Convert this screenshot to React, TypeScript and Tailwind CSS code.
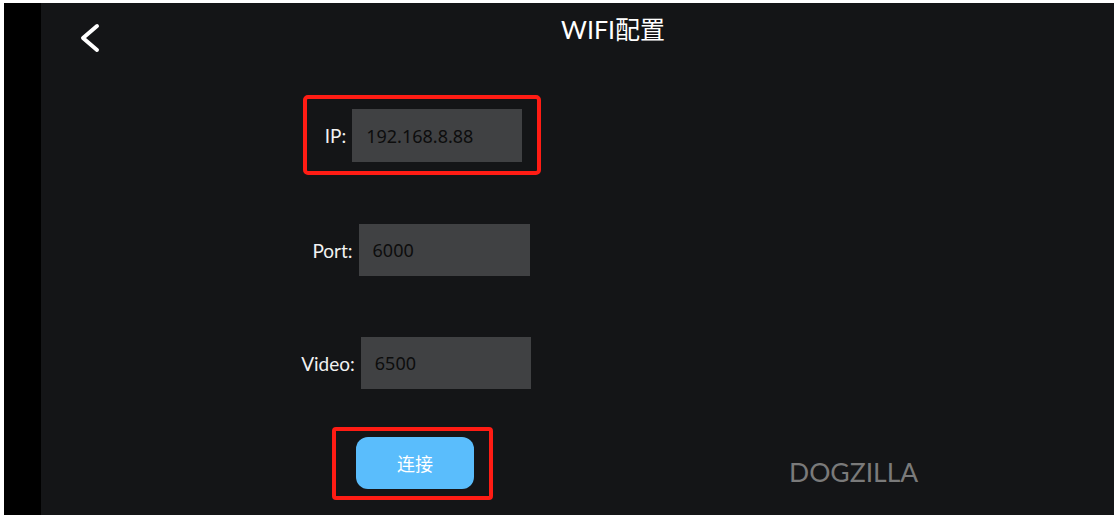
import { useState } from 'react'

const latin = "font-['Lato','Noto_Sans_CJK_SC',sans-serif]"

function Field({ label, value, onChange, className = '' }: { label: string; value: string; onChange: (v: string) => void; className?: string }) {
  return (
    <div className={`flex items-center gap-[6px] ${className}`}>
      <span className={`${latin} text-[19px] leading-none text-[#f2f2f2]`}>{label}</span>
      <input
        value={value}
        onChange={(e) => onChange(e.target.value)}
        className="h-[52px] w-[170px] bg-[#404143] pl-[14px] font-['Noto_Sans',sans-serif] text-[18px] text-[#0d0d0d] outline-none"
      />
    </div>
  )
}

export default function App() {
  const [ip, setIp] = useState('192.168.8.88')
  const [port, setPort] = useState('6000')
  const [video, setVideo] = useState('6500')

  return (
    <div className="h-[517px] w-[1116px] bg-white pb-[2px] pl-[4px] pr-[2px] pt-[3px]">
      <div className="flex h-full">
        <div className="w-[37px] bg-black" />
        <div className="flex flex-1 flex-col bg-[#141517]">
          {/* header */}
          <div className="flex h-[56px] items-start">
            <button className="ml-[37px] mt-[19px]">
              <svg width="24" height="32" viewBox="0 0 24 32" fill="none">
                <polyline points="19,4 5,16 19,28" stroke="white" strokeWidth="4" strokeLinecap="round" strokeLinejoin="round" />
              </svg>
            </button>
            <h1 className={`${latin} ml-[459px] mt-[14px] text-[25px] leading-none text-white`}>WIFI配置</h1>
          </div>

          <div className="flex flex-1">
            <div className="flex w-[748px] flex-col items-center">
              <div className="ml-[14px] mt-[36px] rounded-[5px] border-4 border-[#ff1c14] pb-[9px] pl-[18px] pr-[15px] pt-[10px]">
                <Field label="IP:" value={ip} onChange={setIp} className="[&>input]:h-[53px]" />
              </div>
              <Field label="Port:" value={port} onChange={setPort} className="ml-[12px] mt-[49px] [&>input]:w-[171px]" />
              <Field label="Video:" value={video} onChange={setVideo} className="ml-[2px] mt-[61px] gap-[5px]" />
              <div className="mr-[5px] mt-[38px] rounded-[4px] border-4 border-[#ff1c14] pb-[7px] pl-[20px] pr-[15px] pt-[6px]">
                <button className="h-[52px] w-[118px] rounded-[12px] bg-[#5abdfc] font-['Noto_Sans_CJK_SC',sans-serif] text-[18px] text-white">
                  连接
                </button>
              </div>
            </div>
            <div className="flex flex-1 flex-col justify-end pb-[30px]">
              <span className={`${latin} text-[26.5px] leading-none text-[#7a7a7a]`}>DOGZILLA</span>
            </div>
          </div>
        </div>
      </div>
    </div>
  )
}
